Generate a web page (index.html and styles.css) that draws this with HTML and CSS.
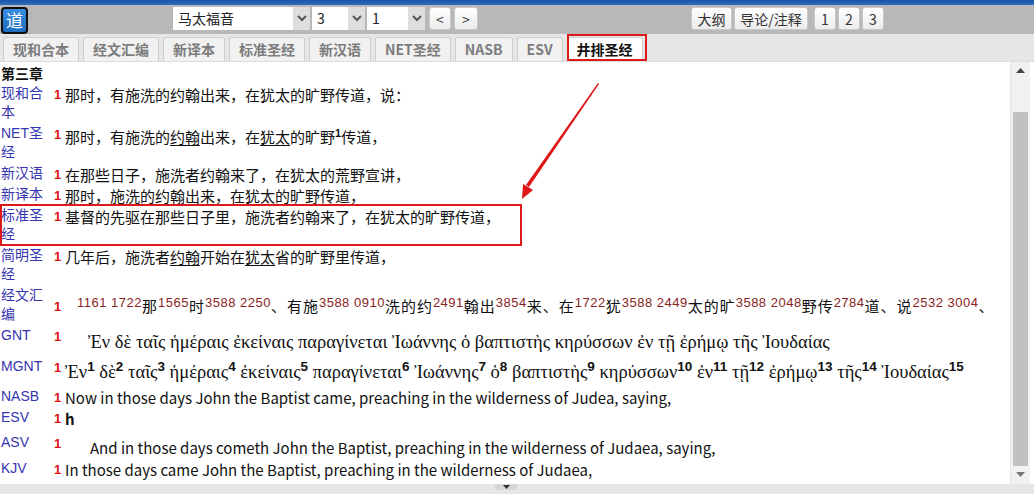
FILE: index.html
```html
<!DOCTYPE html>
<html lang="zh">
<head>
    <meta charset="UTF-8">
    <title>并排圣经</title>
    <link rel="stylesheet" href="styles.css">
</head>
<body>

    <div class="topline"></div>

    <!-- Toolbar -->
    <div class="toolbar">
        <div class="logo">道</div>
        <div class="nav-group">
            <div class="pick pick-book"><span class="pick-text">马太福音</span><span class="pick-arrow"><svg width="10" height="7" viewBox="0 0 10 7"><polyline points="1,1 5,5 9,1" fill="none" stroke="#555" stroke-width="2"/></svg></span></div>
            <div class="pick pick-chapter"><span class="pick-text">3</span><span class="pick-arrow"><svg width="10" height="7" viewBox="0 0 10 7"><polyline points="1,1 5,5 9,1" fill="none" stroke="#555" stroke-width="2"/></svg></span></div>
            <div class="pick pick-verse"><span class="pick-text">1</span><span class="pick-arrow"><svg width="10" height="7" viewBox="0 0 10 7"><polyline points="1,1 5,5 9,1" fill="none" stroke="#555" stroke-width="2"/></svg></span></div>
            <button class="tbtn btn-prev">&lt;</button>
            <button class="tbtn btn-next">&gt;</button>
        </div>
        <div class="right-group">
            <button class="tbtn btn-outline">大纲</button>
            <button class="tbtn btn-intro">导论/注释</button>
            <div class="pages">
                <button class="tbtn btn-page">1</button>
                <button class="tbtn btn-page">2</button>
                <button class="tbtn btn-page">3</button>
            </div>
        </div>
    </div>

    <!-- Version tabs -->
    <ul class="tabs">
        <li>现和合本</li>
        <li>经文汇编</li>
        <li>新译本</li>
        <li>标准圣经</li>
        <li>新汉语</li>
        <li>NET圣经</li>
        <li>NASB</li>
        <li>ESV</li>
        <li class="active">井排圣经</li>
    </ul>

    <div class="main">
        <div class="content">
            <div class="chapter">第三章</div>
            <table class="par">
                <colgroup><col class="c-label"><col class="c-num"><col></colgroup>
                <tr>
                    <td class="lbl">现和合本</td><td class="num">1</td>
                    <td class="txt">那时，有施洗的约翰出来，在犹太的旷野传道，说：</td>
                </tr>
                <tr>
                    <td class="lbl">NET圣经</td><td class="num">1</td>
                    <td class="txt net">那时，有施洗的<u>约翰</u>出来，在<u>犹太</u>的旷野<sup>1</sup>传道，</td>
                </tr>
                <tr>
                    <td class="lbl">新汉语</td><td class="num">1</td>
                    <td class="txt">在那些日子，施洗者约翰来了，在犹太的荒野宣讲，</td>
                </tr>
                <tr>
                    <td class="lbl">新译本</td><td class="num">1</td>
                    <td class="txt">那时，施洗的约翰出来，在犹太的旷野传道，</td>
                </tr>
                <tr>
                    <td class="lbl">标准圣经</td><td class="num">1</td>
                    <td class="txt">基督的先驱在那些日子里，施洗者约翰来了，在犹太的旷野传道，</td>
                </tr>
                <tr>
                    <td class="lbl">简明圣经</td><td class="num">1</td>
                    <td class="txt">几年后，施洗者<u>约翰</u>开始在<u>犹太</u>省的旷野里传道，</td>
                </tr>
                <tr class="row-mid">
                    <td class="lbl">经文汇编</td><td class="num">1</td>
                    <td class="txt strong"><sup>1161 1722</sup>那<sup>1565</sup>时<sup>3588 2250</sup>、有施<sup>3588 0910</sup>洗的约<sup>2491</sup>翰出<sup>3854</sup>来、在<sup>1722</sup>犹<sup>3588 2449</sup>太的旷<sup>3588 2048</sup>野传<sup>2784</sup>道、说<sup>2532 3004</sup>、</td>
                </tr>
                <tr>
                    <td class="lbl">GNT</td><td class="num">1</td>
                    <td class="txt greek gnt">Ἐν δὲ ταῖς ἡμέραις ἐκείναις παραγίνεται Ἰωάννης ὁ βαπτιστὴς κηρύσσων ἐν τῇ ἐρήμῳ τῆς Ἰουδαίας</td>
                </tr>
                <tr>
                    <td class="lbl">MGNT</td><td class="num">1</td>
                    <td class="txt greek mgnt">Ἐν<sup>1</sup> δὲ<sup>2</sup> ταῖς<sup>3</sup> ἡμέραις<sup>4</sup> ἐκείναις<sup>5</sup> παραγίνεται<sup>6</sup> Ἰωάννης<sup>7</sup> ὁ<sup>8</sup> βαπτιστὴς<sup>9</sup> κηρύσσων<sup>10</sup> ἐν<sup>11</sup> τῇ<sup>12</sup> ἐρήμῳ<sup>13</sup> τῆς<sup>14</sup> Ἰουδαίας<sup>15</sup></td>
                </tr>
                <tr>
                    <td class="lbl">NASB</td><td class="num">1</td>
                    <td class="txt">Now in those days John the Baptist came, preaching in the wilderness of Judea, saying,</td>
                </tr>
                <tr class="row-esv">
                    <td class="lbl">ESV</td><td class="num">1</td>
                    <td class="txt esv">h</td>
                </tr>
                <tr>
                    <td class="lbl">ASV</td><td class="num">1</td>
                    <td class="txt asv">And in those days cometh John the Baptist, preaching in the wilderness of Judaea, saying,</td>
                </tr>
                <tr>
                    <td class="lbl">KJV</td><td class="num">1</td>
                    <td class="txt">In those days came John the Baptist, preaching in the wilderness of Judaea,</td>
                </tr>
            </table>
        </div>

        <!-- Scrollbar -->
        <div class="vscroll">
            <div class="vs-btn"><svg width="9" height="5" viewBox="0 0 9 5"><polygon points="0,5 4.5,0 9,5" fill="#444"/></svg></div>
            <div class="vs-space"></div>
            <div class="vs-thumb"></div>
            <div class="vs-btn"><svg width="9" height="5" viewBox="0 0 9 5"><polygon points="0,0 4.5,5 9,0" fill="#777"/></svg></div>
        </div>
    </div>

    <div class="bottombar">
        <div class="handle"><svg width="7" height="4" viewBox="0 0 7 4"><polygon points="0,0 3.5,4 7,0" fill="#333"/></svg></div>
    </div>

    <!-- Red annotations drawn over the page -->
    <svg class="marks" width="1034" height="494" viewBox="0 0 1034 494">
        <rect x="568" y="35" width="78" height="25" fill="none" stroke="#dd1a1a" stroke-width="2"/>
        <rect x="1" y="205" width="520" height="40" fill="none" stroke="#dd1a1a" stroke-width="2"/>
        <polygon points="598,83 599,84 529,187 526,185" fill="#e01515"/>
        <polygon points="522,199 523,184 533,190" fill="#e01515"/>
    </svg>

</body>
</html>
```

FILE: styles.css
```css
/* Page */
body {
    margin: 0;
    width: 1034px;
    height: 494px;
    overflow: hidden;
    position: relative;
    font-family: "Noto Sans CJK SC", sans-serif;
    background-color: #e6e6e6;
    color: #111;
}

.topline {
    height: 5px;
    background: linear-gradient(#1b55a3, #2b6dbd);
}

/* Toolbar */
.toolbar {
    height: 29px;
    background-color: #b8b8b8;
    display: flex;
    align-items: flex-start;
}

.logo {
    width: 23px;
    height: 23px;
    margin: 2px 0 0 1px;
    border: 2px solid #111;
    border-radius: 4px;
    background: linear-gradient(#3a8ee0, #1d6cc0);
    color: #fff;
    font-size: 17px;
    line-height: 22px;
    text-align: center;
}

.nav-group {
    display: flex;
    margin: 2px 0 0 145px;
}

.pick {
    display: flex;
    height: 23px;
    background-color: #fff;
    margin-right: 2px;
}

.pick-text {
    flex: 1;
    font-size: 14px;
    line-height: 23px;
    padding-left: 5px;
    color: #222;
}

.pick-arrow {
    width: 17px;
    background-color: #dedede;
    display: flex;
    align-items: center;
    justify-content: center;
}

.pick-book { width: 137px; }
.pick-chapter { width: 53px; }
.pick-verse { width: 58px; }

.tbtn {
    height: 23px;
    padding: 0;
    border: 1px solid #c9c9c9;
    border-radius: 3px;
    background: linear-gradient(#ffffff, #ececec);
    font-family: "Noto Sans CJK SC", sans-serif;
    font-size: 14px;
    line-height: 20px;
    color: #333;
}

.btn-prev { width: 22px; margin-left: 2px; }
.btn-next { width: 24px; margin-left: 3px; }

.right-group {
    display: flex;
    margin: 2px 0 0 213px;
}

.btn-outline { width: 41px; }
.btn-intro { width: 74px; margin-left: 2px; }

.pages {
    display: flex;
    gap: 2px;
    margin-left: 6px;
}

.btn-page { width: 22px; }

/* Tabs */
.tabs {
    list-style: none;
    margin: 0;
    padding: 3px 0 0 3px;
    height: 24px;
    background-color: #e6e6e6;
    display: flex;
    gap: 4px;
}

.tabs li {
    height: 23px;
    padding: 0 9px;
    border: 1px solid #cfcfcf;
    border-bottom: none;
    border-radius: 3px 3px 0 0;
    background-color: #f1f1f1;
    font-size: 14px;
    font-weight: bold;
    line-height: 22px;
    color: #7c7c7c;
}

.tabs li.active {
    background-color: #fff;
    color: #111;
}

/* Main area */
.main {
    height: 422px;
    border-top: 1px solid #dcdcdc;
    display: flex;
    background-color: #fff;
}

.content {
    width: 1011px;
    overflow: hidden;
}

.chapter {
    padding: 2px 0 0 1px;
    height: 19px;
    font-size: 14px;
    font-weight: bold;
    line-height: 19px;
}

.par {
    width: 100%;
    table-layout: fixed;
    border-collapse: collapse;
}

.c-label { width: 50px; }
.c-num { width: 15px; }

.par td {
    padding: 1px 0;
    vertical-align: top;
}

.par .lbl {
    padding-left: 1px;
    font-family: "Liberation Sans", "Noto Sans CJK SC", sans-serif;
    font-size: 14px;
    line-height: 19px;
    color: #3535b0;
}

.par .num {
    padding: 2px 0 0 4px;
    font-family: "Liberation Sans", sans-serif;
    font-size: 13px;
    font-weight: bold;
    line-height: 19px;
    color: #dd1111;
}

.par .txt {
    padding: 2px 0 0 0;
    font-size: 15px;
    line-height: 19px;
    white-space: nowrap;
}

.par u {
    text-decoration-thickness: 1px;
    text-underline-offset: 2px;
}

.txt sup {
    line-height: 0;
}

.txt.net {
    padding-top: 4px;
}

.txt.net sup {
    font-family: "Liberation Sans", sans-serif;
    font-size: 11px;
    font-weight: bold;
}

.row-mid .num,
.row-mid .txt {
    vertical-align: middle;
}

.txt.strong {
    padding: 0 0 0 12px;
    letter-spacing: 1px;
}

.txt.strong sup {
    font-family: "Liberation Sans", sans-serif;
    font-size: 13px;
    letter-spacing: 0.5px;
    color: #8a2424;
    vertical-align: 5px;
}

.par .greek {
    font-family: "Liberation Serif", "DejaVu Serif", serif;
    font-size: 18.5px;
}

.par .gnt {
    padding: 6px 0 3px 23px;
    line-height: 22px;
}

.par .mgnt {
    padding: 4px 0 1px 0;
    line-height: 25px;
}

.txt.mgnt sup {
    font-family: "Liberation Sans", sans-serif;
    font-size: 13.5px;
    font-weight: bold;
    vertical-align: 7px;
}

.row-esv td {
    height: 23px;
}

.txt.esv {
    font-weight: bold;
}

.par .asv {
    padding: 6px 0 1px 25px;
}

/* Fake scrollbar */
.vscroll {
    width: 19px;
    margin-right: 4px;
    background-color: #f1f1f1;
    border-left: 1px solid #e4e4e4;
    display: flex;
    flex-direction: column;
}

.vs-btn {
    height: 17px;
    display: flex;
    align-items: center;
    justify-content: center;
}

.vs-space {
    height: 33px;
}

.vs-thumb {
    height: 354px;
    margin: 0 2px;
    background-color: #c1c1c1;
}

/* Bottom bar */
.bottombar {
    height: 10px;
    background-color: #e6e6e6;
    display: flex;
    justify-content: center;
}

.handle {
    width: 22px;
    height: 6px;
    margin-left: -22px;
    background-color: #d6d6d6;
    border-radius: 0 0 3px 3px;
    display: flex;
    align-items: center;
    justify-content: center;
}

/* Annotation overlay */
.marks {
    position: absolute;
    top: 0;
    left: 0;
    pointer-events: none;
}
```
